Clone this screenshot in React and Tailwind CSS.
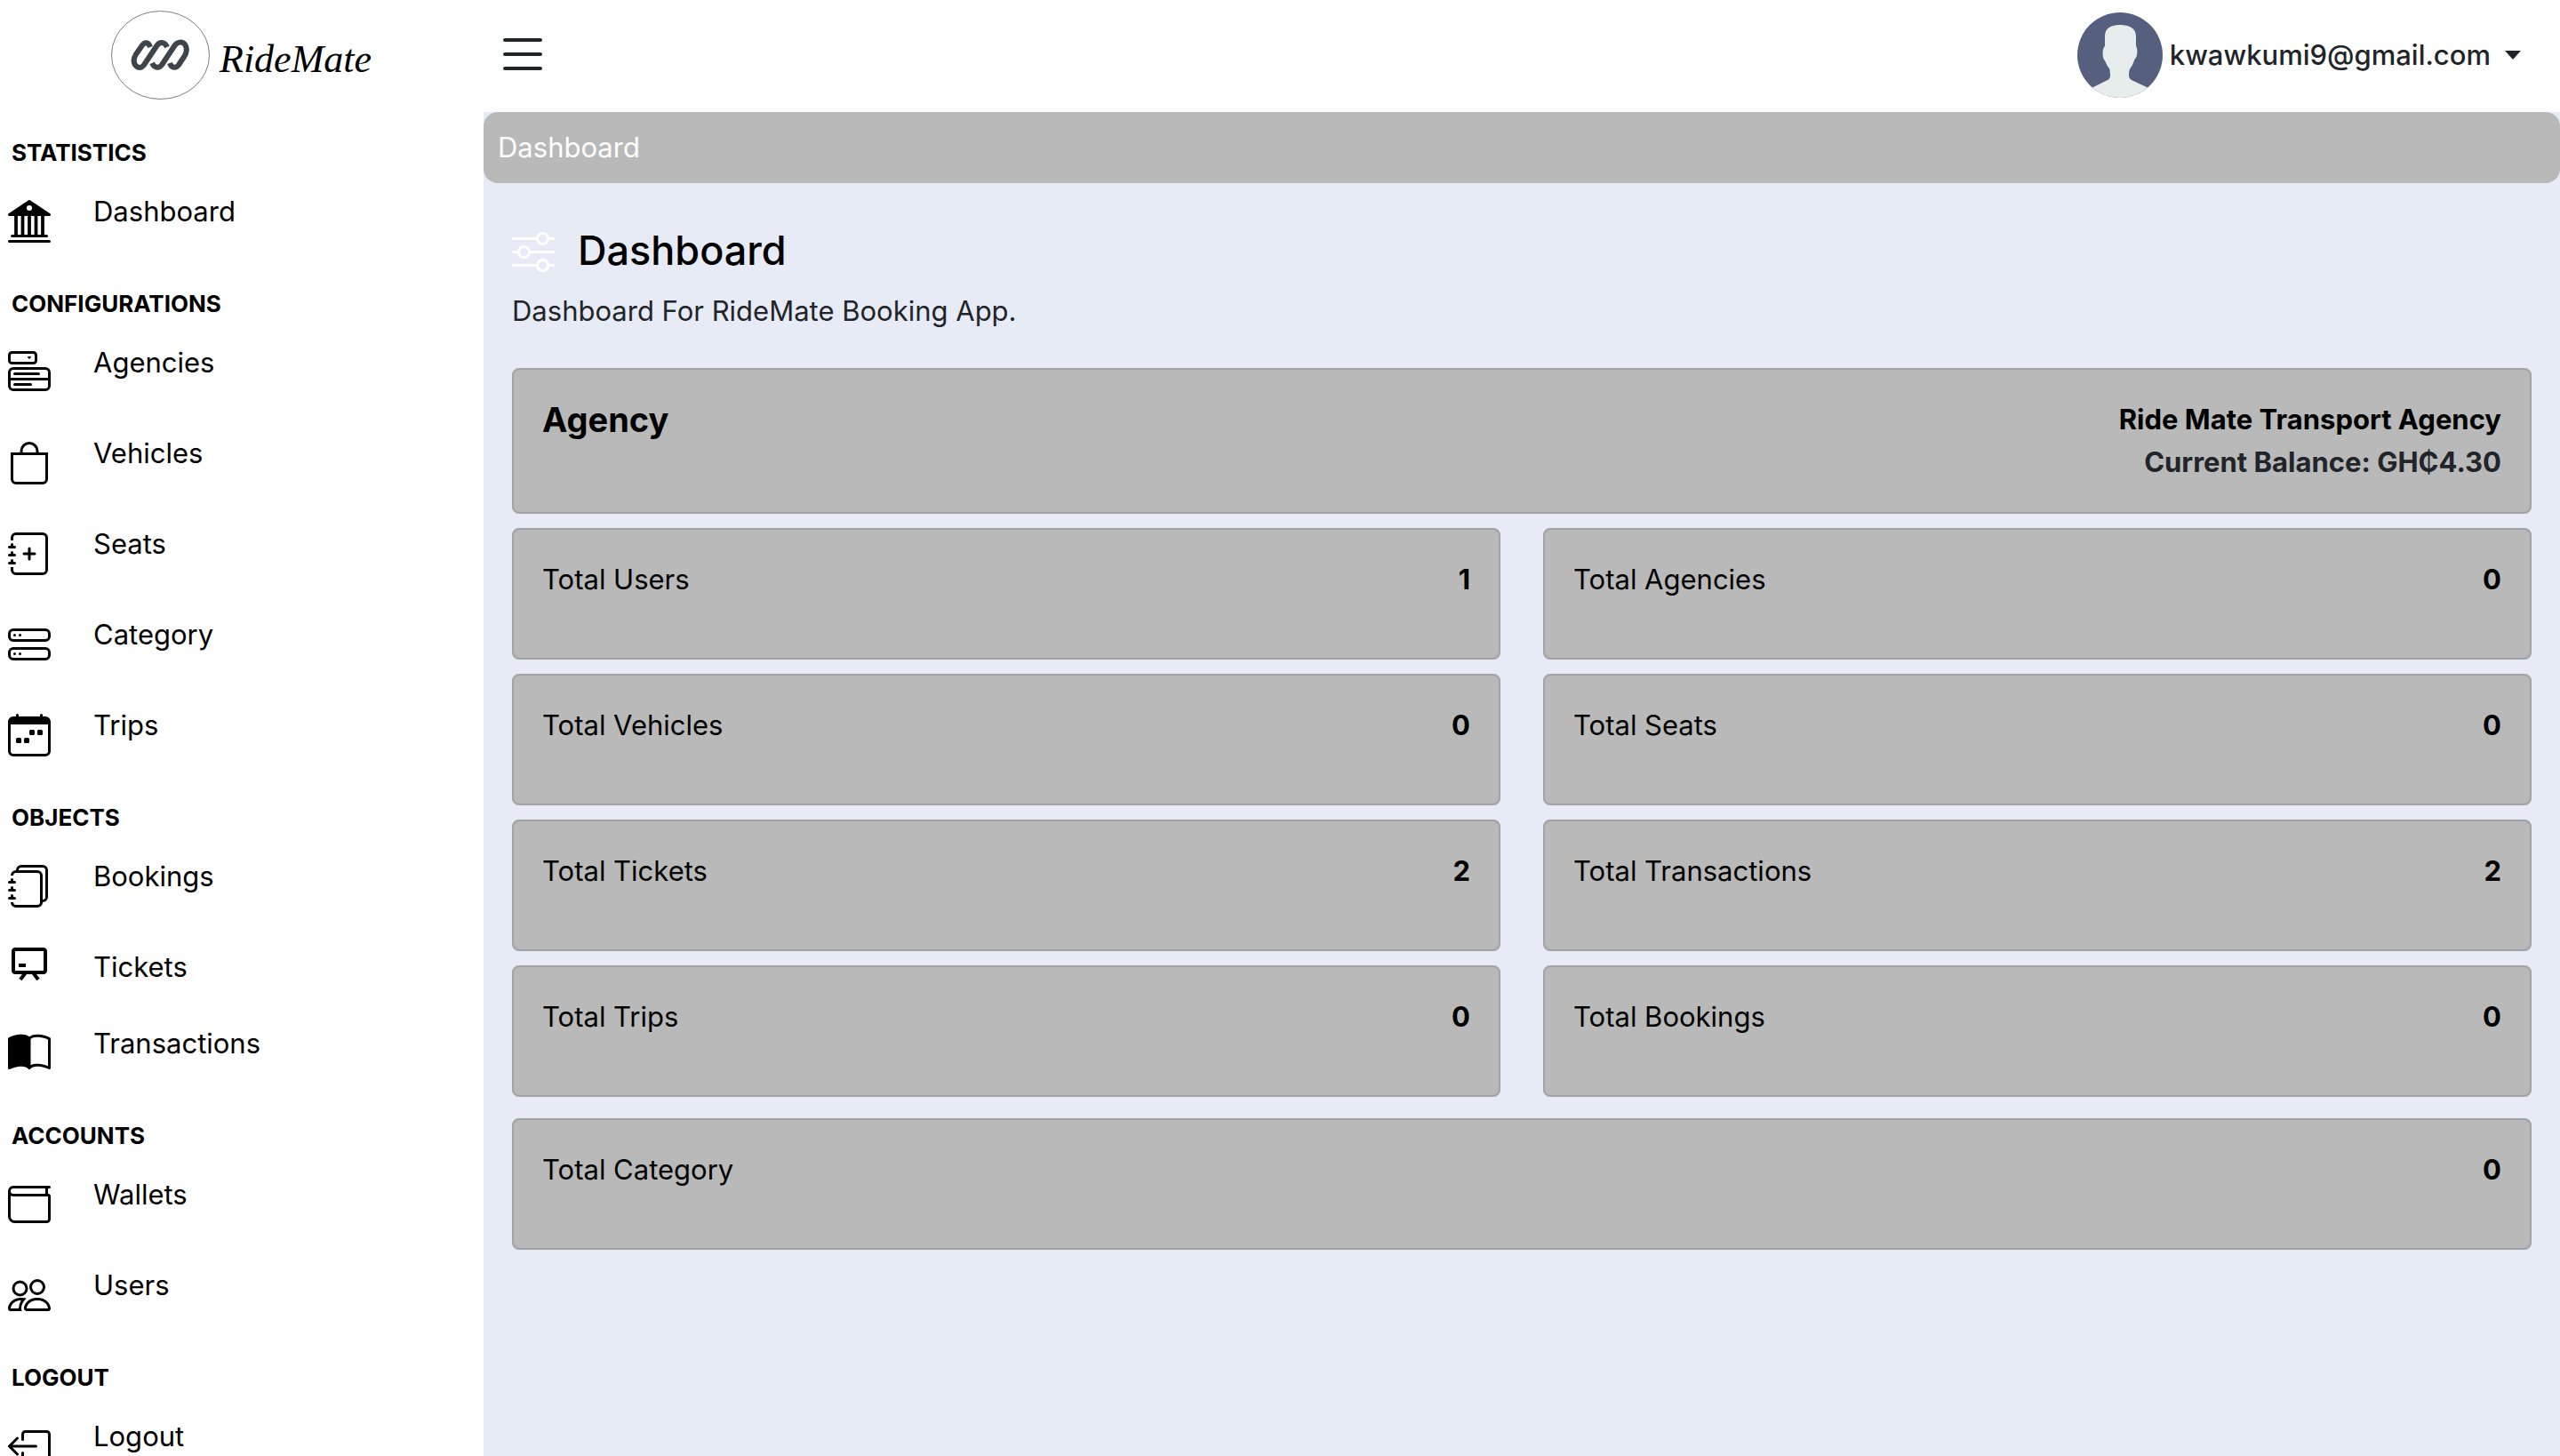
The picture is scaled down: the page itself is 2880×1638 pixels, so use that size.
import {
  BsBag,
  BsBank2,
  BsBookHalf,
  BsBoxArrowLeft,
  BsCalendarWeek,
  BsHddStack,
  BsJournalPlus,
  BsJournals,
  BsList,
  BsMenuButton,
  BsPeople,
  BsSliders,
  BsWallet,
} from "react-icons/bs";
import { BiChalkboard } from "react-icons/bi";

const SECTIONS = [
  { title: "Statistics", items: [{ label: "Dashboard", icon: BsBank2 }] },
  {
    title: "Configurations",
    items: [
      { label: "Agencies", icon: BsMenuButton },
      { label: "Vehicles", icon: BsBag },
      { label: "Seats", icon: BsJournalPlus },
      { label: "Category", icon: BsHddStack },
      { label: "Trips", icon: BsCalendarWeek },
    ],
  },
  {
    title: "Objects",
    items: [
      { label: "Bookings", icon: BsJournals },
      { label: "Tickets", icon: BiChalkboard, compact: true },
      { label: "Transactions", icon: BsBookHalf },
    ],
  },
  {
    title: "Accounts",
    items: [
      { label: "Wallets", icon: BsWallet },
      { label: "Users", icon: BsPeople },
    ],
  },
  { title: "Logout", items: [{ label: "Logout", icon: BsBoxArrowLeft }] },
];

const STATS = [
  ["Total Users", 1],
  ["Total Agencies", 0],
  ["Total Vehicles", 0],
  ["Total Seats", 0],
  ["Total Tickets", 2],
  ["Total Transactions", 2],
  ["Total Trips", 0],
  ["Total Bookings", 0],
];

function Logo() {
  return (
    <a href="#" className="flex h-[126px] items-center pl-[125px] text-black">
      <svg viewBox="0 0 111 100" className="mb-[2px] h-[100px] w-[111px]" fill="none" aria-hidden="true">
        <ellipse cx="55.5" cy="50" rx="55" ry="49.5" stroke="#7b7e83" />
        <g stroke="#3d444c" strokeWidth="6" strokeLinejoin="round">
          <path d="M44 41 C42 35 38 35 35 39 L28 49 C25 54 25 58 27 61 C30 65 34 65 37 61 L51 40 C54 35 60 34 63 41" />
          <path d="M46 59 C49 65 54 65 57 61 L71 40 C74 35 80 34 83 38 C86 42 85 48 82 52 L76 61 C73 65 68 65 66 59" />
        </g>
      </svg>
      <span className="pt-2 pl-[11px] font-['Liberation_Serif',cursive] text-[44px] leading-[48px] italic">
        RideMate
      </span>
    </a>
  );
}

function Sidebar() {
  return (
    <aside className="w-[544px] shrink-0 bg-white">
      <Logo />
      <nav className="mt-5 text-black">
        {SECTIONS.map((section) => (
          <section key={section.title}>
            <h2 className="h-[68px] pl-[13px] text-[26px] leading-[52px] font-bold uppercase">{section.title}</h2>
            <ul>
              {section.items.map(({ label, icon: Icon, compact }) => (
                <li key={label} className={compact ? "h-[86px]" : "h-[102px]"}>
                  <a href="#" className="flex items-start gap-12 pl-[9px]">
                    <Icon className={compact ? "-mt-1 size-12" : "mt-[11px] size-12"} aria-hidden="true" />
                    <span className="text-[31px] leading-[48px]">{label}</span>
                  </a>
                </li>
              ))}
            </ul>
          </section>
        ))}
      </nav>
    </aside>
  );
}

function Avatar() {
  return (
    <svg viewBox="0 0 96 96" className="size-24" aria-hidden="true">
      <clipPath id="avatar-clip">
        <circle cx="48" cy="48" r="48" />
      </clipPath>
      <g clipPath="url(#avatar-clip)">
        <rect width="96" height="96" fill="#56607e" />
        <path
          fill="#e7ecec"
          d="M48 14 C36 14 31 19 31 27 V38 C28 40 28 50 30 53 C32 55 33 60 36 63 C37 66 37 70 37 72 C36 75 35 76 32 77 L16 85 V96 H80 V85 L63 77 C60 76 58 74 58 71 C58 68 58 65 60 62 C63 59 63 55 65 52 C68 50 68 40 66 38 V27 C66 19 60 14 48 14Z"
        />
      </g>
    </svg>
  );
}

function Header() {
  return (
    <header className="flex h-[126px] items-center justify-between bg-white pr-11 pl-3 text-[#212529]">
      <button type="button" aria-label="Toggle sidebar" className="mb-1">
        <BsList className="size-16" />
      </button>
      <button type="button" className="mb-[2px] flex items-center text-[31px] leading-[48px] font-medium">
        <Avatar />
        <span className="pl-2">kwawkumi9@gmail.com</span>
        <svg viewBox="0 0 18 10" className="ml-4 h-[10px] w-[18px]" fill="currentColor" aria-hidden="true">
          <path d="M0 0H18L9 10Z" />
        </svg>
      </button>
    </header>
  );
}

function Card({ children }) {
  return (
    <div className="flex justify-between rounded-lg border-2 border-[#a2a2a2] bg-[#b9b9b9] p-8 leading-[48px] text-black">
      {children}
    </div>
  );
}

function StatCard({ label, value }) {
  return (
    <Card>
      <h3 className="mb-8">{label}</h3>
      <span className="font-bold">{value}</span>
    </Card>
  );
}

export default function App() {
  return (
    <div className="flex h-screen overflow-hidden bg-white font-['Inter',sans-serif] text-[31px]">
      <Sidebar />
      <div className="flex min-w-0 flex-1 flex-col">
        <Header />
        <main className="flex-1 bg-[#e7ebf6]">
          <nav aria-label="Breadcrumb" className="rounded-2xl bg-[#b9b9b9] p-4 leading-[48px] text-white">
            Dashboard
          </nav>
          <div className="px-8 pt-12">
            <div className="flex items-center gap-[26px] leading-[56px]">
              <BsSliders className="size-12 text-white" aria-hidden="true" />
              <h1 className="text-[45px] font-medium text-black">Dashboard</h1>
            </div>
            <p className="mt-4 leading-[48px] text-[#212529]">Dashboard For RideMate Booking App.</p>
            <div className="mt-10 flex flex-col gap-4">
              <Card>
                <h2 className="text-[38px] font-bold">Agency</h2>
                <div className="text-right font-bold">
                  <p>Ride Mate Transport Agency</p>
                  <p className="text-[#212529]">Current Balance: GH₵4.30</p>
                </div>
              </Card>
              <div className="grid grid-cols-2 gap-x-12 gap-y-4">
                {STATS.map(([label, value]) => (
                  <StatCard key={label} label={label} value={value} />
                ))}
              </div>
              <div className="mt-2">
                <StatCard label="Total Category" value={0} />
              </div>
            </div>
          </div>
        </main>
      </div>
    </div>
  );
}
